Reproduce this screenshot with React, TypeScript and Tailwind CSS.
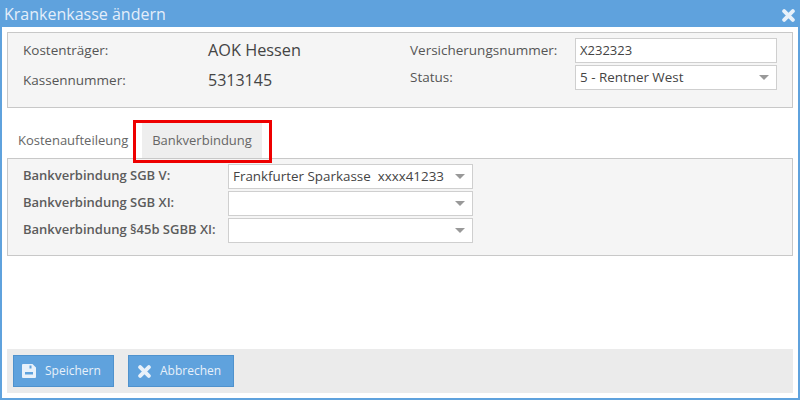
import React from 'react';

const CloseIcon = ({ className }: { className: string }) => (
  <svg viewBox="0 0 12 12" className={className} fill="none" stroke="currentColor" strokeWidth="3.6" strokeLinecap="round">
    <path d="M2 2 L10 10 M10 2 L2 10" />
  </svg>
);

const SaveIcon = ({ className }: { className: string }) => (
  <svg viewBox="0 0 16 16" className={className} fill="currentColor" fillRule="evenodd">
    <path d="M1 2 Q1 1 2 1 H11.5 L15 4.5 V14 Q15 15 14 15 H2 Q1 15 1 14 Z M8.5 2.5 H10.5 V5.5 H8.5 Z M4 9 H12 V11.5 H4 Z" />
  </svg>
);

const SelectBox = ({ value, className }: { value?: string; className: string }) => (
  <div className={`h-[25px] bg-white border border-[#cfcfcf] flex items-center justify-between pl-[4px] pr-[7px] ${className}`}>
    <span className="text-[13.4px] text-[#444] whitespace-pre">{value}</span>
    <span className="w-0 h-0 border-x-[5px] border-x-transparent border-t-[5px] border-t-[#999]" />
  </div>
);

const bankRows = [
  { label: 'Bankverbindung SGB V:', value: 'Frankfurter Sparkasse  xxxx41233' },
  { label: 'Bankverbindung SGB XI:', value: '' },
  { label: 'Bankverbindung §45b SGBB XI:', value: '' },
];

export default function App() {
  return (
    <div className="w-[800px] h-[400px] flex flex-col bg-[#5fa2dd] font-['Open_Sans',sans-serif] overflow-hidden">
      <div className="h-[27px] shrink-0 flex items-center justify-between pl-[4px] pr-[5px] text-[#e4eefa]">
        <span className="text-[16px] leading-none">Krankenkasse ändern</span>
        <CloseIcon className="w-[13px] h-[13px] text-[#e8f1fa] mt-[4px]" />
      </div>

      <div className="flex-1 mx-[2px] mb-[2px] bg-white px-[5px] pt-[5px] pb-[5px] flex flex-col relative">
        {/* Kopfdaten */}
        <div className="h-[76px] shrink-0 bg-[#f5f5f5] border border-[#c8c8c8] pl-[15px] flex text-[#555] text-[13.5px]">
          <div className="w-[387px] pt-[7px]">
            <div className="h-[20px] flex items-center">
              <span className="w-[185px]">Kostenträger:</span>
              <span className="text-[16.3px] text-[#444]">AOK Hessen</span>
            </div>
            <div className="h-[20px] mt-[10px] flex items-center">
              <span className="w-[185px]">Kassennummer:</span>
              <span className="text-[16px] text-[#444] font-medium">5313145</span>
            </div>
          </div>
          <div className="pt-[5px]">
            <div className="flex items-center h-[25px]">
              <span className="w-[165px] -mt-[1px]">Versicherungsnummer:</span>
              <div className="w-[202px] h-[25px] bg-white border border-[#cfcfcf] flex items-center pl-[4px] pt-[1px] text-[13px] text-[#444]">X232323</div>
            </div>
            <div className="flex items-center h-[25px] mt-[2px]">
              <span className="w-[165px]">Status:</span>
              <SelectBox value="5 - Rentner West" className="w-[202px]" />
            </div>
          </div>
        </div>

        {/* Tabs */}
        <div className="h-[50px] shrink-0 flex items-end pl-[11px]">
          <div className="h-[35px] w-[124px] flex items-center text-[13px] text-[#666]">Kostenaufteileung</div>
          <div className="h-[35px] w-[120px] flex items-center justify-center text-[13px] text-[#666] bg-[#eeeeee]">Bankverbindung</div>
        </div>

        <div className="h-[98px] shrink-0 bg-[#f5f5f5] border border-[#c8c8c8] pl-[15px] pt-[5px] flex flex-col gap-[2px]">
          {bankRows.map((row) => (
            <div key={row.label} className="flex items-center h-[25px]">
              <span className="w-[205px] text-[13px] font-semibold text-[#5c5c5c] -mt-[2px]">{row.label}</span>
              <SelectBox value={row.value} className="w-[245px]" />
            </div>
          ))}
        </div>

        <div className="flex-1" />

        {/* Footer */}
        <div className="h-[44px] shrink-0 bg-[#ebebeb] flex items-center pl-[6px] gap-[14px]">
          <button className="w-[101px] h-[32px] bg-[#5fa2dd] border border-[#4f92cd] flex items-center pl-[7px] text-[#e8f1fa] text-[12px]">
            <SaveIcon className="w-[16px] h-[16px] mr-[8px]" />
            Speichern
          </button>
          <button className="w-[106px] h-[32px] bg-[#5fa2dd] border border-[#4f92cd] flex items-center pl-[9px] text-[#e8f1fa] text-[12px]">
            <CloseIcon className="w-[13px] h-[13px] mr-[9px]" />
            Abbrechen
          </button>
        </div>

        {/* Markierung */}
        <div className="absolute left-[131px] top-[93px] w-[139px] h-[43px] border-[3px] border-[#ee0000]" />
      </div>
    </div>
  );
}
